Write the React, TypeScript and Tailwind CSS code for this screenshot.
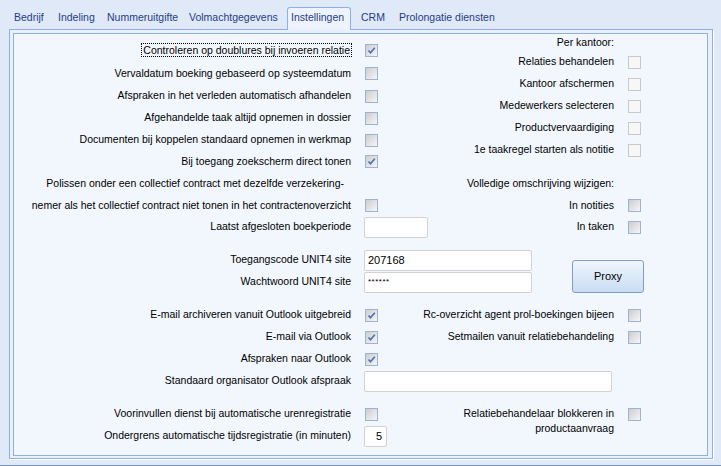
import type { ReactNode } from "react";

const tabs = [
  { label: "Bedrijf", w: "w-[44px]", pl: "pl-[5px]" },
  { label: "Indeling", w: "w-[49px]", pl: "pl-[5px]" },
  { label: "Nummeruitgifte", w: "w-[82px]", pl: "pl-[5px]" },
  { label: "Volmachtgegevens", w: "w-[103px]", pl: "pl-[5px]" },
];

function Check({ checked, disabled }: { checked?: boolean; disabled?: boolean }) {
  return (
    <span
      className={
        disabled
          ? "flex h-[13px] w-[13px] shrink-0 border border-[#c9c9c9] bg-[#f7f7f7]"
          : "flex h-[13px] w-[13px] shrink-0 border border-[#9cb3d6] bg-gradient-to-br from-[#cdcdcd] to-[#f6f6f6]"
      }
    >
      {checked && (
        <svg viewBox="0 0 11 11" className="h-[11px] w-[11px]">
          <path d="M2.5 5.5 L4.5 7.8 L8.8 2.8" fill="none" stroke="#4f72b4" strokeWidth="1.7" />
        </svg>
      )}
    </span>
  );
}

function Input({ w, value, small, right }: { w: string; value?: string; small?: boolean; right?: boolean }) {
  return (
    <div
      className={`flex h-[21px] ${w} shrink-0 items-center rounded-[2px] border border-[#d2d2d2] bg-white px-[3px] ${
        right ? "justify-end pr-[4px]" : ""
      } ${small ? "text-[8px] tracking-[0.5px]" : "text-[11px]"}`}
    >
      {value}
    </div>
  );
}

function Left({ label, control, h = "h-[22px]" }: { label?: ReactNode; control?: ReactNode; h?: string }) {
  return (
    <div className={`flex ${h} w-[386px] shrink-0 items-center`}>
      <div className="w-[337px] shrink-0 whitespace-nowrap text-right">{label}</div>
      <div className="ml-[13px] flex">{control}</div>
    </div>
  );
}

function Right({ label, control }: { label?: ReactNode; control?: ReactNode }) {
  return (
    <div className="flex items-center">
      <div className="w-[214px] shrink-0 whitespace-nowrap text-right">{label}</div>
      <div className="ml-[14px] flex">{control}</div>
    </div>
  );
}

export default function App() {
  return (
    <div className="flex h-[466px] w-[721px] flex-col overflow-hidden bg-[#dfe9f8] font-['Liberation_Sans',Arial,sans-serif] text-[10.5px] text-black">
      {/* tabs */}
      <div className="mt-[7px] flex h-[22px] items-center pl-[9px] text-[#1f3d86]">
        {tabs.map((t) => (
          <div key={t.label} className={`${t.w} ${t.pl} shrink-0`}>
            {t.label}
          </div>
        ))}
        <div className="relative z-10 -mb-px flex h-[23px] w-[64px] shrink-0 items-center self-start rounded-t-[3px] border border-b-0 border-[#8eb0e3] bg-[#edf3fd] pb-[2px] pl-[3px]">
          Instellingen
        </div>
        <div className="w-[48px] shrink-0 pl-[10px]">CRM</div>
        <div className="shrink-0">Prolongatie diensten</div>
      </div>

      {/* tab page */}
      <div className="ml-[9px] flex h-[430px] w-[704px] flex-col border border-[#8eb0e3] bg-[#e9f0fc] pb-[2px] pl-[3px] pr-[4px] pt-[3px] shadow-[1px_1px_0_#ffffff]">
        <div className="flex-1 border border-[#8eb0e3] bg-[#f2f7fe]">
          {/* upper section */}
          <div className="flex">
            <div className="w-[386px] shrink-0 pt-[5px]">
              <Left
                h="h-[23px]"
                label={<span className="px-px outline-1 outline-dotted outline-black">Controleren op doublures bij invoeren relatie</span>}
                control={<span className="ml-px"><Check checked /></span>}
              />
              <Left h="h-[23px]" label="Vervaldatum boeking gebaseerd op systeemdatum" control={<span className="ml-px"><Check /></span>} />
              <Left label="Afspraken in het verleden automatisch afhandelen" control={<span className="ml-px"><Check /></span>} />
              <Left label="Afgehandelde taak altijd opnemen in dossier" control={<span className="ml-px"><Check /></span>} />
              <Left label="Documenten bij koppelen standaard opnemen in werkmap" control={<span className="ml-px"><Check /></span>} />
              <Left h="h-[21px]" label="Bij toegang zoekscherm direct tonen" control={<span className="ml-px"><Check checked /></span>} />
            </div>
            <div className="flex flex-col">
              <div className="flex h-[17px] items-center">
                <Right label="Per kantoor:" />
              </div>
              {["Relaties behandelen", "Kantoor afschermen", "Medewerkers selecteren", "Productvervaardiging", "1e taakregel starten als notitie"].map((l) => (
                <div key={l} className="flex h-[22px] items-center">
                  <Right label={l} control={<Check disabled />} />
                </div>
              ))}
            </div>
          </div>

          {/* collectief contract */}
          <div className="flex h-[23px] items-center">
            <Left h="h-[23px]" label={<span className="pr-[7px]">Polissen onder een collectief contract met dezelfde verzekering-</span>} />
            <Right label="Volledige omschrijving wijzigen:" />
          </div>
          <div className="flex h-[21px] items-center">
            <Left h="h-[21px]" label="nemer als het collectief contract niet tonen in het contractenoverzicht" control={<span className="ml-px"><Check /></span>} />
            <Right label="In notities" control={<Check />} />
          </div>
          <div className="flex h-[22px] items-center">
            <Left label="Laatst afgesloten boekperiode" control={<Input w="w-[64px]" />} />
            <Right label="In taken" control={<Check />} />
          </div>

          {/* UNIT4 */}
          <div className="mt-[11px] flex">
            <div>
              <Left label="Toegangscode UNIT4 site" control={<Input w="w-[168px]" value="207168" />} />
              <Left label="Wachtwoord UNIT4 site" control={<Input w="w-[168px]" value="******" small />} />
            </div>
            <button className="ml-[172px] mt-[11px] h-[33px] w-[72px] rounded-[3px] border border-[#7f9fc9] bg-gradient-to-b from-[#f0f6fe] via-[#dce9f8] to-[#c8ddf5] text-[11px]">
              Proxy
            </button>
          </div>

          {/* Outlook */}
          <div className="mt-[11px] flex h-[22px] items-center">
            <Left label="E-mail archiveren vanuit Outlook uitgebreid" control={<span className="ml-px"><Check checked /></span>} />
            <Right label="Rc-overzicht agent prol-boekingen bijeen" control={<Check />} />
          </div>
          <div className="flex h-[22px] items-center">
            <Left label="E-mail via Outlook" control={<span className="ml-px"><Check checked /></span>} />
            <Right label="Setmailen vanuit relatiebehandeling" control={<Check />} />
          </div>
          <Left label="Afspraken naar Outlook" control={<span className="ml-px"><Check checked /></span>} />
          <Left label="Standaard organisator Outlook afspraak" control={<Input w="w-[248px]" />} />

          {/* tijdsregistratie */}
          <div className="mt-[11px] flex">
            <div>
              <Left label="Voorinvullen dienst bij automatische urenregistratie" control={<span className="ml-px"><Check /></span>} />
              <Left label="Ondergrens automatische tijdsregistratie (in minuten)" control={<Input w="w-[23px]" value="5" right />} />
            </div>
            <div className="flex items-start">
              <div className="w-[214px] shrink-0 pt-[3px] text-right leading-[15px]">
                Relatiebehandelaar blokkeren in
                <br />
                productaanvraag
              </div>
              <div className="ml-[14px] mt-[5px] flex">
                <Check />
              </div>
            </div>
          </div>
        </div>
      </div>

      <div className="mt-auto h-px bg-[#7595c9]" />
    </div>
  );
}
